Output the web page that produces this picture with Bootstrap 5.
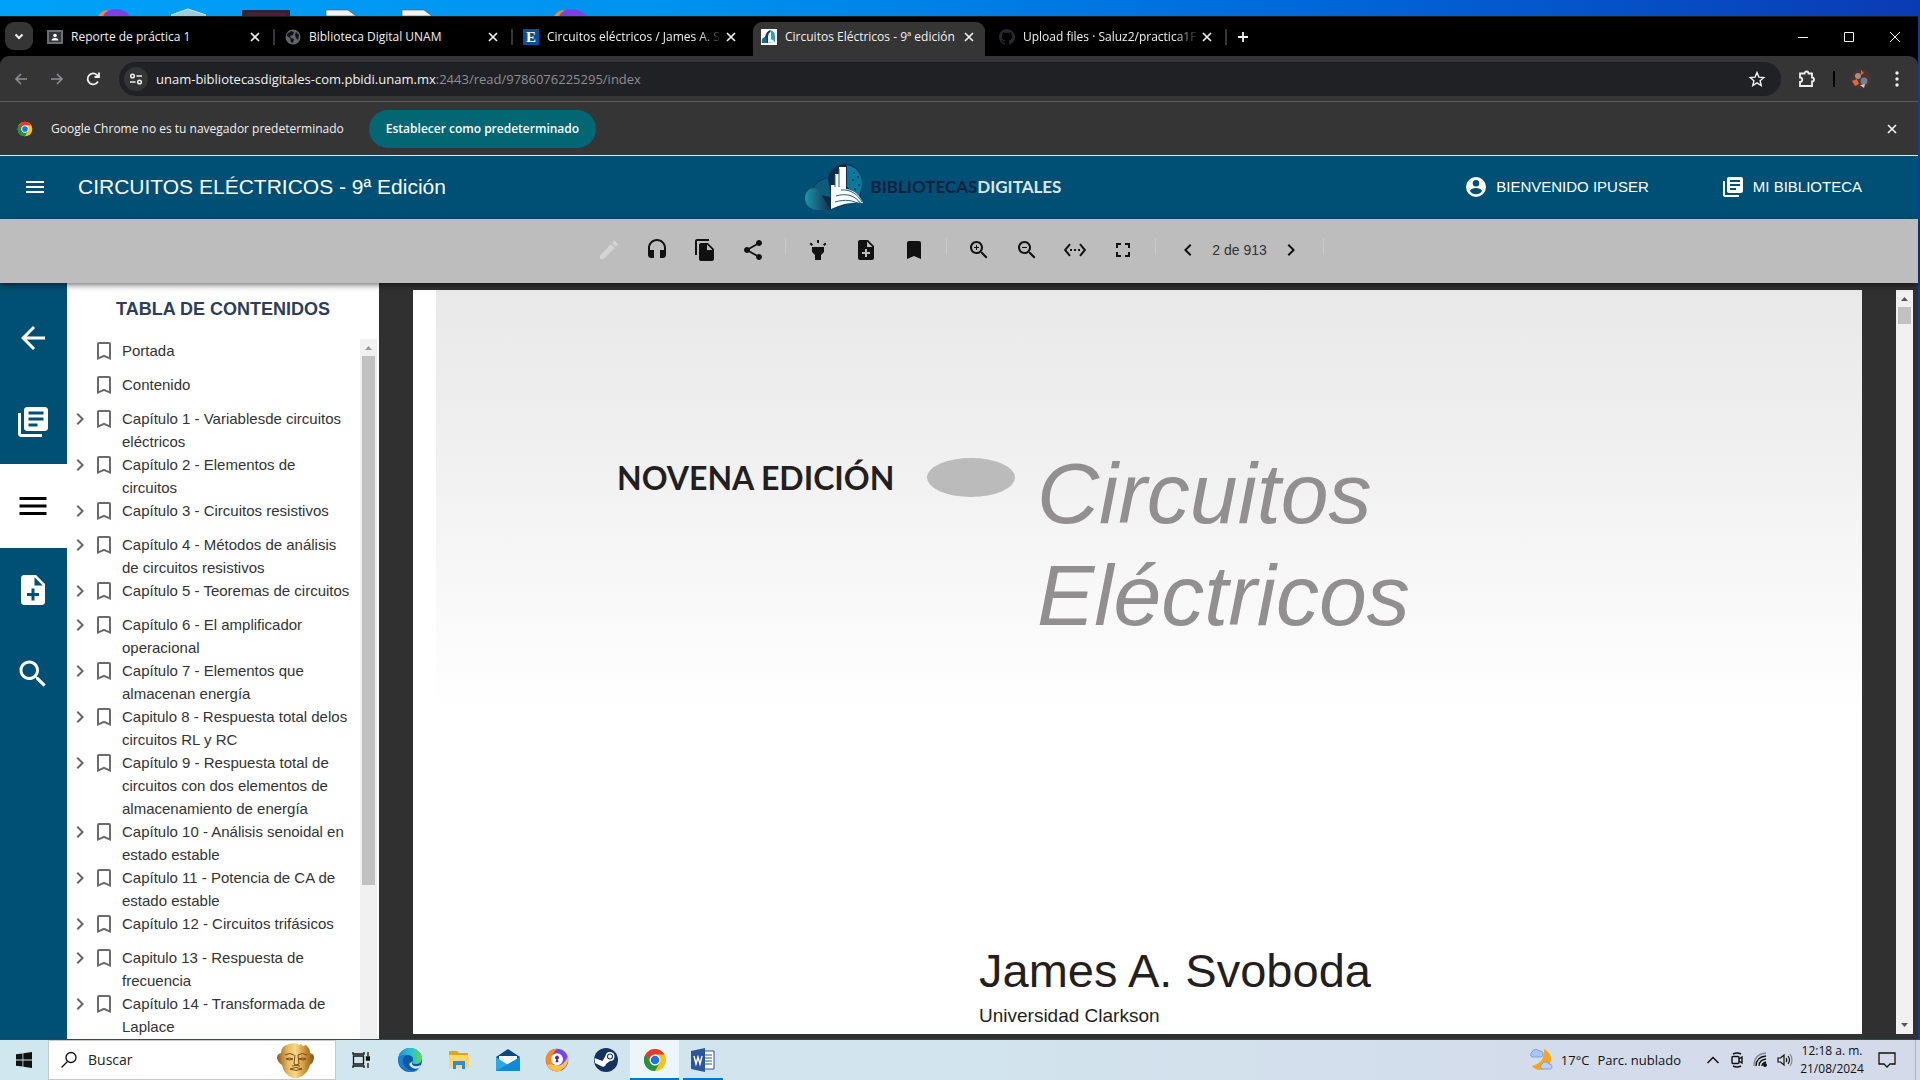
<!DOCTYPE html>
<html lang="es">
<head>
<meta charset="utf-8">
<meta name="viewport" content="width=device-width, initial-scale=1">
<title>Circuitos Eléctricos - 9ª edición</title>
<link href="https://cdn.jsdelivr.net/npm/bootstrap@5.3.0/dist/css/bootstrap.min.css" rel="stylesheet">
<style>
:root { --ui: "Open Sans", "Noto Sans", sans-serif; --app: "Liberation Sans", Arial, sans-serif; --blue: #004f74; }
body { font-family: var(--app); font-size: 15px; line-height: 24px; height: 100vh; overflow: hidden; background: linear-gradient(90deg, #00a2f8, #0092ef 35%, #0068da 68%, #0b3ab4); }
button { border: 0; background: none; padding: 0; color: inherit; display: inline-flex; align-items: center; justify-content: center; }
a { color: inherit; text-decoration: none; }
svg { display: block; flex: none; fill: currentColor; }
.i16 { width: 16px; height: 16px; } .i20 { width: 20px; height: 20px; } .i24 { width: 24px; height: 24px; } .i36 { width: 36px; height: 36px; }
.ln { fill: none; stroke: currentColor; }
.win { margin-right: 2px; min-height: 0; }
.chrome-ui { font-family: var(--ui); font-size: 12px; color: #f1f1f1; }
.tabstrip { height: 40px; background: #000; border-top: 1px solid #1b1b1b; padding: 5px 0 0 5px; }
.tab-list-btn { width: 28px; height: 28px; border-radius: 9px; background: #353535; margin-right: 4px; }
.tabitem { width: 238px; height: 34px; padding: 0 12px 4px 10px; position: relative; }
.tabitem .tab-text { flex: 1; margin: 0 0 0 8px; white-space: nowrap; min-width: 0; }
.tabitem .fade-text { -webkit-mask-image: linear-gradient(90deg, #000 86%, transparent); mask-image: linear-gradient(90deg, #000 86%, transparent); }
.tabitem.sep::after { content: ""; position: absolute; right: 0; top: 7px; width: 2px; height: 16px; background: #35363a; }
.tabitem.current { background: #353535; border-radius: 9px 9px 0 0; width: 232px; margin: 0 4px 0 2px; padding: 0 8px 4px; }
.winbtn { width: 46px; height: 30px; }
.navrow { height: 46px; background: #353535; border-radius: 9px 9px 0 0; border-bottom: 1px solid #5c5c5c; padding: 0 11px 0 3px; }
.navbtn { width: 36px; height: 34px; }
.navsep { width: 2px; height: 16px; background: #000; margin: 0 16px; }
.omnibox { height: 34px; border-radius: 17px; background: #202124; padding: 0 14px 0 5px; margin-left: 8px; font-size: 13px; }
.omnibox .site { width: 24px; height: 24px; border-radius: 50%; background: #353535; }
.dim { color: #8d8f93; }
.infobar { height: 54px; background: #353535; border-bottom: 1px solid #e6e6e6; padding: 0 18px 0 17px; font-size: 12px; }
.info-text { margin: 0 25px 0 18px; }
.default-btn { height: 38px; border-radius: 19px; background: #036773; color: #fff; padding: 0 17px; font-weight: 600; }
.apphead { height: 63px; background: var(--blue); color: #fff; padding-bottom: 2px; }
.apphead h1 { font-size: 21px; line-height: 24px; margin: 0; font-weight: 400; }
.side-cell { flex: 1 1 0; }
.menu-btn { padding: 0 31px 0 23px; }
.brand-link { padding-right: 52px; }
.wordmark { font-family: Lato, "Liberation Sans", sans-serif; font-weight: 700; font-size: 17px; line-height: 24px; color: #12203e; }
.wordmark span { color: #dfe6ea; }
.tools { height: 64px; background: #bdbdbd; color: #111; box-shadow: 0 2px 6px rgba(0,0,0,.55); position: relative; z-index: 2; padding: 0 1px 2px 0; }
.tools button { width: 48px; height: 48px; }
.tsep { width: 1px; height: 16px; background: #c9c9c9; margin: 0 8px 8px; }
.pagenum { width: 55px; text-align: center; font-size: 14px; color: #333; white-space: nowrap; }
.rail { width: 67px; background: var(--blue); color: #fff; padding-top: 13px; }
.rail button { height: 84px; width: 67px; padding-right: 2px; }
.rail .on { background: #fff; color: #000; }
.toc { width: 312px; background: #fff; }
.toc h2 { font-size: 18px; line-height: 24px; font-weight: 700; color: #2c3e5a; margin: 14px 0 18px; text-align: center; }
.toclist { list-style: none; margin: 0; padding: 0 0 0 1px; flex: 1; overflow: hidden; color: #333; font-size: 15px; line-height: 23px; }
.toclist li { min-height: 34px; display: flex; align-items: flex-start; }
.toclist a { max-width: 230px; }
.toclist button, .toclist .gap { width: 24px; height: 24px; color: #666; flex: none; }
.toclist .mark-ic { color: #6b6b6b; margin-right: 6px; }
.track { width: 17px; background: #f1f1f1; color: #555; }
.toc .track { margin-right: 2px; color: #999; }
.thumb { width: 13px; background: #c1c1c1; }
.viewer { background: #303030; padding: 7px 5px 5px 34px; }
.sheet { background: #fff; margin-right: 34px; padding-left: 23px; overflow: hidden; }
.cover { height: 100%; background: linear-gradient(#e9e9e9, #f0f0f0 160px, #fff 420px); padding-top: 152px; }
.edition { font-family: Lato, "Liberation Sans", sans-serif; font-weight: 700; font-size: 32px; line-height: 44px; color: #231f20; width: 310px; margin: 14px 0 0 181px; white-space: nowrap; }
.dot { width: 88px; height: 39px; border-radius: 50%; background: #bbb; margin-top: 16px; }
.book-title { font-size: 86px; line-height: 102px; font-style: italic; color: #918f90; margin: 0 0 0 22px; font-weight: 400; }
.author { margin: 299px 0 0 543px; color: #231f20; }
.author h3 { font-size: 47px; line-height: 52px; font-weight: 400; margin: 0 0 7px; }
.author p { font-size: 19px; line-height: 24px; margin: 0; }
.taskbar { height: 41px; border-top: 1px solid #1c4f6b; background: linear-gradient(90deg, #d0e7ef, #d2e4ee 50%, #d3dceb 80%, #d4daea); font-family: var(--ui); font-size: 13px; color: #111; }
.searchbox { width: 288px; height: 40px; background: #fff; border: 1px solid #c5c9cb; padding: 0 20px 0 11px; }
.searchbox input { border: 0; outline: 0; flex: 1; min-width: 0; margin-left: 10px; padding: 0; font-size: 14px; background: none; }
.searchbox input::placeholder { color: #222; opacity: 1; }
.start-btn { width: 48px; height: 40px; }
.task { width: 49px; height: 40px; border-bottom: 2px solid transparent; padding-top: 2px; }
.task.open { border-color: #0078d4; width: 40px; margin-left: 4px; }
.task.focus-app { border-color: #0078d4; background: #ecf5f9; }
.tray button { width: 24px; height: 40px; }
.clock { font-size: 12px; line-height: 18px; text-align: center; width: 70px; }
.desk-edge { width: 1px; height: 40px; background: #aab4c4; }
</style>
<script src="https://cdn.jsdelivr.net/npm/bootstrap@5.3.0/dist/js/bootstrap.bundle.min.js"></script>
</head>
<body class="d-flex flex-column">
<svg width="0" height="0" class="position-absolute" aria-hidden="true">
 <symbol id="x" viewBox="0 0 16 16"><path d="M4 4l8 8M12 4l-8 8" fill="none" stroke="currentColor" stroke-width="1.7"/></symbol>
 <symbol id="menu" viewBox="0 0 24 24"><path d="M3 18h18v-2H3v2zm0-5h18v-2H3v2zm0-7v2h18V6H3z"/></symbol>
 <symbol id="lib" viewBox="0 0 24 24"><path d="M4 6H2v14c0 1.100.9 2 2 2h14v-2H4V6zm16-4H8c-1.100 0-2 .9-2 2v12c0 1.100.9 2 2 2h12c1.100 0 2-.9 2-2V4c0-1.100-.9-2-2-2zm-1 9H9V9h10v2zm-4 4H9v-2h6v2zm4-8H9V5h10v2z"/></symbol>
 <symbol id="note" viewBox="0 0 24 24"><path d="M14 2H6c-1.100 0-2 .9-2 2v16c0 1.100.9 2 2 2h12c1.100 0 2-.9 2-2V8l-6-6zm2 14h-3v3h-2v-3H8v-2h3v-3h2v3h3v2zm-3-7V3.500L18.500 9H13z"/></symbol>
 <symbol id="search" viewBox="0 0 24 24"><path d="M15.500 14h-.79l-.28-.27C15.410 12.590 16 11.110 16 9.500 16 5.910 13.090 3 9.500 3S3 5.910 3 9.500 5.910 16 9.500 16c1.610 0 3.090-.59 4.230-1.570l.27.28v.79l5 4.990L20.490 19l-4.990-5zm-6 0C7.010 14 5 11.990 5 9.500S7.010 5 9.500 5 14 7.010 14 9.500 11.990 14 9.500 14z"/></symbol>
 <symbol id="bm" viewBox="0 0 24 24"><path d="M17 3H7c-1.100 0-2 .9-2 2v16l7-3 7 3V5c0-1.100-.9-2-2-2zm0 15l-5-2.180L7 18V5h10v13z"/></symbol>
 <symbol id="right" viewBox="0 0 24 24"><path d="M10 6L8.590 7.410 13.170 12l-4.580 4.590L10 18l6-6z"/></symbol>
 <symbol id="left" viewBox="0 0 24 24"><path d="M15.410 7.410L14 6l-6 6 6 6 1.410-1.410L10.830 12z"/></symbol>
 <symbol id="chrome" viewBox="0 0 48 48"><circle cx="24" cy="24" r="22" fill="#fbc116"/><path d="M24 24L33.500 29.500 24 46A22 22 0 0 1 5 13l9.500 16.500z" fill="#229342"/><path d="M5 13A22 22 0 0 1 43 13H24l-9 16z" fill="#e33b2e"/><path d="M5 13l9.500 16.500L24 35l-5 10.500A22 22 0 0 1 5 13z" fill="#229342"/><circle cx="24" cy="24" r="11" fill="#fff"/><circle cx="24" cy="24" r="8.500" fill="#1a73e8"/></symbol>
 <symbol id="fox" viewBox="0 0 32 32"><circle cx="16" cy="16" r="15" fill="#7548e6"/><path d="M16 1C5 1-2 12 3 23c4 8 14 10 20 6-6 0-14-4-14-13 0-7 3-11 7-15z" fill="#ff8a1c"/><path d="M3 23c4 8 16 11 24 2 4-5 4-9 3-14-2 8-8 13-14 12-4 0-9-3-13 0z" fill="#ffc34a"/><circle cx="16" cy="15" r="8" fill="#fff"/><path d="M14 19l1-4a2.500 2.500 0 1 1 2 0l1 4z" fill="#4c2c92"/></symbol>
</svg>

<svg width="640" height="16" viewBox="0 0 640 16" aria-hidden="true">
 <path d="M98 16q4-6 10-6l4 6z" fill="#ff8a1c"/><path d="M103 16q3-7 14-7 9 1 13 7z" fill="#7c3fe8"/>
 <path d="M171 15l17-6 18 6v1h-35z" fill="#9ccbe0"/><path d="M171 15l17-6 18 6" fill="none" stroke="#d5e8ef"/>
 <path d="M242 10h48v6h-48z" fill="#2c2540"/><path d="M247 13h38v3h-38z" fill="#591c2c"/>
 <path d="M326 10h22l8 6h-30zM402 10h22l8 6h-30z" fill="#f3f3f3" stroke="#555" stroke-width=".6"/>
 <path d="M554 16q4-6 10-6l4 6z" fill="#ff8a1c"/><path d="M559 16q3-7 14-7 9 1 13 7z" fill="#7c3fe8"/>
</svg>

<div class="win d-flex flex-column flex-grow-1">
 <header class="chrome-ui">
  <div class="tabstrip d-flex">
   <button class="tab-list-btn" aria-label="Buscar pestañas"><svg class="i16 ln" viewBox="0 0 16 16" stroke-width="2"><path d="M4.500 6.500L8 10l3.500-3.500"/></svg></button>
   <div class="tabitem sep d-flex align-items-center">
    <svg class="i16" viewBox="0 0 16 16"><path fill="#6a6d74" d="M0 1h16v14H0z"/><path fill="#33353a" d="M2 3h12v10H2z"/><circle cx="8" cy="6.500" r="1.800" fill="#fff"/><path d="M4.500 11.500q0-2.500 3.500-2.500t3.500 2.500z" fill="#fff"/></svg>
    <a href="#" class="tab-text">Reporte de práctica 1</a><button aria-label="Cerrar"><svg class="i16"><use href="#x"/></svg></button>
   </div>
   <div class="tabitem sep d-flex align-items-center">
    <svg class="i16" viewBox="0 0 16 16"><circle cx="8" cy="8" r="7.500" fill="#62656a"/><path fill="#111" d="M2 5l4-3 3 1-1 3-3 1 1 2 3 1-1 4-2-1-1-4-3-2zM11 3l3 3-1 5-2-2-1-3z"/></svg>
    <a href="#" class="tab-text">Biblioteca Digital UNAM</a><button aria-label="Cerrar"><svg class="i16"><use href="#x"/></svg></button>
   </div>
   <div class="tabitem d-flex align-items-center">
    <svg class="i16 overflow-visible" viewBox="0 0 16 16"><path fill="#0d4f94" d="M0 0h16v16H0z"/><text x="3" y="13" font-family="Liberation Serif, serif" font-weight="700" font-size="15" fill="#fff">E</text></svg>
    <a href="#" class="tab-text fade-text">Circuitos eléctricos / James A. S</a><button aria-label="Cerrar"><svg class="i16"><use href="#x"/></svg></button>
   </div>
   <div class="tabitem current d-flex align-items-center">
    <svg class="i16" viewBox="0 0 16 16"><path fill="#fff" d="M0 0h16v16H0z"/><path fill="#12425f" d="M1 14q-1-5 3-6 1-6 6-7v13z"/><path fill="#3a9cc2" d="M9 1q5 1 5 6v6q-3 0-5 1z"/><path fill="#1d6c93" d="M1 13q-1-4 4-5l1 6H2z"/><path fill="#eef5f8" d="M7 14V7l1-3 2-1v7q3 1 4 4-4-1-7 0z"/></svg>
    <a href="#" class="tab-text">Circuitos Eléctricos - 9ª edición</a><button aria-label="Cerrar"><svg class="i16"><use href="#x"/></svg></button>
   </div>
   <div class="tabitem sep d-flex align-items-center">
    <svg class="i16" viewBox="0 0 16 16"><path fill="#24292f" d="M8 0C3.580 0 0 3.580 0 8c0 3.540 2.290 6.530 5.470 7.590.4.070.55-.17.55-.38v-1.500c-2 .4-2.500-.5-2.700-1-.1-.2-.5-.9-.8-1.100-.3-.2-.7-.5 0-.5.6 0 1.100.6 1.200.8.7 1.200 1.900.9 2.300.7.1-.5.3-.9.500-1.100-1.800-.2-3.600-.9-3.600-4 0-.9.300-1.600.8-2.200-.1-.2-.4-1 .1-2.100 0 0 .7-.2 2.200.8a7.500 7.500 0 0 1 4 0c1.500-1 2.200-.8 2.200-.8.4 1.100.200 1.900.1 2.100.5.6.8 1.300.8 2.200 0 3.100-1.900 3.800-3.700 4 .3.300.6.800.6 1.500v2.200c0 .2.100.5.500.4A8 8 0 0 0 8 0z"/></svg>
    <a href="#" class="tab-text fade-text">Upload files · Saluz2/practica1F</a><button aria-label="Cerrar"><svg class="i16"><use href="#x"/></svg></button>
   </div>
   <button class="ms-2" aria-label="Nueva pestaña"><svg class="i16 ln mb-1" viewBox="0 0 16 16" stroke-width="1.800"><path d="M8 3v10M3 8h10"/></svg></button>
   <div class="ms-auto d-flex">
    <button class="winbtn" aria-label="Minimizar"><svg class="i16 ln" viewBox="0 0 16 16"><path d="M3 8.500h10"/></svg></button>
    <button class="winbtn" aria-label="Maximizar"><svg class="i16 ln" viewBox="0 0 16 16"><path d="M3.500 3.500h9v9h-9z"/></svg></button>
    <button class="winbtn" aria-label="Cerrar ventana"><svg class="i16 ln" viewBox="0 0 16 16"><path d="M3 3l10 10M13 3L3 13"/></svg></button>
   </div>
  </div>
  <div class="bg-black"><nav class="navrow d-flex align-items-center">
   <button class="navbtn" aria-label="Atrás"><svg class="i16 ln dim" viewBox="0 0 16 16" stroke-width="1.600"><path d="M14 8H3M8 3L3 8l5 5"/></svg></button>
   <button class="navbtn" aria-label="Adelante"><svg class="i16 ln dim" viewBox="0 0 16 16" stroke-width="1.600"><path d="M2 8h11M8 3l5 5-5 5"/></svg></button>
   <button class="navbtn" aria-label="Recargar"><svg class="i16 ln" viewBox="0 0 16 16" stroke-width="1.800"><path d="M13 10.500A5.500 5.500 0 1 1 12 4l1.500 1.500M14 1.500V6H9.500"/></svg></button>
   <div class="omnibox d-flex align-items-center flex-grow-1">
    <button class="site me-2" aria-label="Información del sitio"><svg class="i16 ln" viewBox="0 0 16 16" stroke-width="1.500"><circle cx="4.500" cy="5" r="1.800"/><path d="M8.500 5H14M2 11h5.500"/><circle cx="11.500" cy="11" r="1.800"/></svg></button>
    <a href="#" class="flex-grow-1 text-nowrap">unam-bibliotecasdigitales-com.pbidi.unam.mx<span class="dim">:2443/read/9786076225295/index</span></a>
    <button aria-label="Marcar"><svg class="i20 ln" viewBox="0 0 20 20" stroke-width="1.400"><path d="M10 3.500l1.900 4.600 4.900.4-3.700 3.200 1.100 4.800-4.200-2.600-4.200 2.600 1.100-4.800-3.700-3.200 4.900-.4z"/></svg></button>
   </div>
   <button class="ms-3" aria-label="Extensiones"><svg class="i20 ln" viewBox="0 0 20 20" stroke-width="1.800"><path d="M3 4.500h4.500a2 2 0 0 1 4 0H15v4a2 2 0 0 1 0 4V17H3v-4a2.200 2.200 0 0 0 0-4.500z"/></svg></button>
   <span class="navsep"></span>
   <button aria-label="Perfil"><svg class="i20" viewBox="0 0 20 20"><circle cx="10" cy="10" r="10" fill="#4a3432"/><circle cx="7" cy="7" r="3" fill="#a78d84"/><circle cx="13" cy="12" r="3.500" fill="#75808f"/><path d="M10 1l3 3-3 2zM1 12l5-2 2 5-4 2z" fill="#dd6a38"/><path d="M9 16l5-1-1 4z" fill="#d5cbbb"/></svg></button>
   <button class="ms-3" aria-label="Menú de Chrome"><svg class="i20" viewBox="0 0 20 20"><circle cx="10" cy="4" r="1.700"/><circle cx="10" cy="10" r="1.700"/><circle cx="10" cy="16" r="1.700"/></svg></button>
  </nav></div>
  <div class="infobar d-flex align-items-center">
   <svg class="i16"><use href="#chrome"/></svg><span class="info-text">Google Chrome no es tu navegador predeterminado</span>
   <button class="default-btn">Establecer como predeterminado</button>
   <button class="ms-auto" aria-label="Cerrar aviso"><svg class="i16"><use href="#x"/></svg></button>
  </div>
 </header>

 <header class="apphead d-flex align-items-center">
  <div class="side-cell d-flex align-items-center"><button class="menu-btn" aria-label="Menú"><svg class="i24"><use href="#menu"/></svg></button><h1>CIRCUITOS ELÉCTRICOS - 9ª Edición</h1></div>
  <a href="#" class="brand-link d-flex align-items-center">
   <svg width="58" height="48" viewBox="0 0 58 48" class="me-2"><defs><linearGradient id="cl" x1="0" x2="1"><stop offset="0" stop-color="#1e93ab"/><stop offset="1" stop-color="#12304e"/></linearGradient></defs><path d="M26 46H11C4 46 0 41 0 35c0-6 4-10 9-10 1-5 6-10 14-9 1-8 8-15 17-15 11 0 18 9 17 21l-2 15z" fill="#102b4a"/><path d="M26 47H11C4 46 0 41 0 35c0-6 4-10 9-10 6 0 8 4 8 8z" fill="url(#cl)"/><path d="M9 25c3-7 9-9 14-9l3 18-10-2c-1-4-3-7-7-7z" fill="#0d5c7e"/><path d="M42 2c10 2 15 9 15 20l-3 12-12-10z" fill="#087a9e"/><path d="M48 9h2v2h-2zm4 4h2v2h-2zm-5 3h2v2h-2zm6 5h2v2h-2zm-4 4h2v2h-2z" fill="#123e60"/><path d="M26 22h4V11h4V4h7v22c9 1 14 7 17 14q-14-2-32 6z" fill="#fff"/><path d="M30 24V12M34 24V6M36 27c10-1 17 5 21 12M31 33c10-3 19-1 25 8M30 39c10-3 18-2 26 3" fill="none" stroke="#12607f" stroke-width="1"/></svg>
   <strong class="wordmark">BIBLIOTECAS<span>DIGITALES</span></strong></a>
  <div class="side-cell d-flex justify-content-end align-items-center">
   <a href="#" class="d-flex align-items-center me-5"><svg class="i24 me-2" viewBox="0 0 24 24"><path fill-rule="evenodd" d="M12 2a10 10 0 1 0 0 20 10 10 0 0 0 0-20zm0 3a3.300 3.300 0 1 1 0 6.600A3.300 3.300 0 0 1 12 5zm0 14.200a7.200 7.200 0 0 1-6-3.220c.03-1.990 4-3.080 6-3.080s5.970 1.090 6 3.080a7.200 7.200 0 0 1-6 3.220z"/></svg>BIENVENIDO IPUSER</a>
   <a href="#" class="d-flex align-items-center ms-4 pe-2 me-5"><svg class="i24 me-2"><use href="#lib"/></svg>MI BIBLIOTECA</a>
  </div>
 </header>

 <div class="tools d-flex justify-content-center align-items-center">
  <button disabled aria-label="Editar" style="color:#d4d4d4"><svg class="i24" viewBox="0 0 24 24"><path d="M3 17.250V21h3.750L17.810 9.940l-3.750-3.750L3 17.250zM20.710 7.040c.39-.39.39-1.020 0-1.410l-2.340-2.340c-.39-.39-1.020-.39-1.410 0l-1.830 1.830 3.750 3.750 1.830-1.830z"/></svg></button>
  <button aria-label="Escuchar"><svg class="i24" viewBox="0 0 24 24"><path d="M12 1c-4.970 0-9 4.030-9 9v7c0 1.660 1.340 3 3 3h3v-8H5v-2c0-3.870 3.130-7 7-7s7 3.130 7 7v2h-4v8h3c1.660 0 3-1.340 3-3v-7c0-4.970-4.030-9-9-9z"/></svg></button>
  <button aria-label="Copiar"><svg class="i24" viewBox="0 0 24 24"><path d="M16 1H4c-1.100 0-2 .9-2 2v14h2V3h12V1zm-1 4l6 6v10c0 1.100-.9 2-2 2H7.990C6.890 23 6 22.100 6 21l.010-14c0-1.100.89-2 1.990-2h7zm-1 7h5.500L14 6.500V12z"/></svg></button>
  <button aria-label="Compartir"><svg class="i24" viewBox="0 0 24 24"><path d="M18 16.080c-.76 0-1.440.3-1.960.77L8.910 12.700c.05-.23.09-.46.09-.7s-.04-.47-.09-.7l7.050-4.110c.54.5 1.250.81 2.040.81 1.660 0 3-1.340 3-3s-1.340-3-3-3-3 1.340-3 3c0 .24.040.47.090.7L8.040 9.810C7.500 9.310 6.790 9 6 9c-1.660 0-3 1.340-3 3s1.340 3 3 3c.79 0 1.500-.31 2.040-.81l7.120 4.160c-.05.21-.08.43-.08.650 0 1.610 1.310 2.920 2.920 2.920s2.920-1.310 2.920-2.920-1.310-2.920-2.920-2.920z"/></svg></button>
  <span class="tsep"></span>
  <button aria-label="Resaltar"><svg class="i24" viewBox="0 0 24 24"><path d="M6 14l3 3v5h6v-5l3-3V9H6zm5-12h2v3h-2zM3.500 5.880l1.410-1.410 2.120 2.120L5.620 8zm13.460.71l2.120-2.120 1.410 1.410L18.380 8z"/></svg></button>
  <button aria-label="Agregar nota"><svg class="i24"><use href="#note"/></svg></button>
  <button aria-label="Marcador"><svg class="i24" viewBox="0 0 24 24"><path d="M17 3H7c-1.100 0-1.990.9-1.990 2L5 21l7-3 7 3V5c0-1.100-.9-2-2-2z"/></svg></button>
  <span class="tsep"></span>
  <button aria-label="Acercar"><svg class="i24" viewBox="0 0 24 24"><use href="#search"/><path d="M12 10h-2v2H9v-2H7V9h2V7h1v2h2z"/></svg></button>
  <button aria-label="Alejar"><svg class="i24" viewBox="0 0 24 24"><use href="#search"/><path d="M7 9h5v1H7z"/></svg></button>
  <button aria-label="Ajustar ancho"><svg class="i24" viewBox="0 0 24 24"><path d="M7.770 6.760L6.230 5.480.82 12l5.410 6.520 1.540-1.280L3.420 12l4.350-5.240zM7 13h2v-2H7v2zm10-2h-2v2h2v-2zm-6 2h2v-2h-2v2zm6.770-7.520l-1.540 1.280L20.580 12l-4.350 5.240 1.540 1.280L23.180 12l-5.410-6.520z"/></svg></button>
  <button aria-label="Pantalla completa"><svg class="i24" viewBox="0 0 24 24"><path d="M7 14H5v5h5v-2H7v-3zm-2-4h2V7h3V5H5v5zm12 7h-3v2h5v-5h-2v3zM14 5v2h3v3h2V5h-5z"/></svg></button>
  <span class="tsep"></span>
  <button aria-label="Anterior"><svg class="i24"><use href="#left"/></svg></button>
  <span class="pagenum">2 de 913</span>
  <button aria-label="Siguiente"><svg class="i24"><use href="#right"/></svg></button>
  <span class="tsep"></span>
 </div>

 <main class="d-flex flex-grow-1 overflow-hidden">
  <nav class="rail d-flex flex-column">
   <button aria-label="Volver"><svg class="i36" viewBox="0 0 24 24"><path d="M20 11H7.830l5.590-5.590L12 4l-8 8 8 8 1.410-1.410L7.830 13H20v-2z"/></svg></button>
   <button aria-label="Biblioteca"><svg class="i36"><use href="#lib"/></svg></button>
   <button class="on" aria-label="Contenidos"><svg class="i36"><use href="#menu"/></svg></button>
   <button aria-label="Notas"><svg class="i36"><use href="#note"/></svg></button>
   <button aria-label="Buscar"><svg class="i36"><use href="#search"/></svg></button>
  </nav>
  <aside class="toc d-flex flex-column">
   <h2>TABLA DE CONTENIDOS</h2>
   <div class="d-flex flex-grow-1 overflow-hidden">
    <ul class="toclist" id="toc"></ul>
    <div class="track d-flex flex-column align-items-center"><svg width="17" height="17" viewBox="0 0 17 17"><path d="M5 11l3.500-4 3.500 4z"/></svg><div class="thumb" style="height:75.5%"></div></div>
   </div>
  </aside>
  <section class="viewer d-flex flex-grow-1">
   <article class="sheet flex-grow-1"><div class="cover">
    <div class="d-flex align-items-start"><p class="edition">NOVENA EDICIÓN</p><div class="dot"></div><h1 class="book-title">Circuitos<br>Eléctricos</h1></div>
    <div class="author"><h3>James A. Svoboda</h3><p>Universidad Clarkson</p></div>
   </div></article>
   <div class="track d-flex flex-column align-items-center"><svg width="17" height="17" viewBox="0 0 17 17"><path d="M5 11l3.500-4 3.500 4z"/></svg><div class="thumb" style="height:17px"></div><svg class="mt-auto" width="17" height="17" viewBox="0 0 17 17"><path d="M5 6l3.500 4L12 6z"/></svg></div>
  </section>
 </main>
</div>

<footer class="taskbar d-flex align-items-center">
 <button class="start-btn" aria-label="Inicio"><svg class="i16" viewBox="0 0 16 16"><path d="M0 2.300L6.500 1.400v6.100H0zM7.300 1.300L16 0v7.500H7.300zM0 8.400h6.500v6.200L0 13.700zM7.300 8.400H16V16l-8.700-1.300z"/></svg></button>
 <label class="searchbox d-flex align-items-center"><svg class="ln" width="18" height="18" viewBox="0 0 18 18" stroke-width="1.300"><circle cx="11" cy="6.500" r="5"/><path d="M7.500 10.500L1.500 16.500"/></svg><input type="text" placeholder="Buscar" aria-label="Buscar">
  <svg width="38" height="37" viewBox="0 0 38 37"><defs><linearGradient id="gold"><stop offset="0" stop-color="#8e5a1c"/><stop offset=".3" stop-color="#e9bd62"/><stop offset=".5" stop-color="#f6d88a"/><stop offset=".7" stop-color="#d79f42"/><stop offset="1" stop-color="#8a5317"/></linearGradient></defs><path d="M6 5q6-4 13-4l3 2 2-1 2 2 3-1q4 3 4 8 4 1 4 4 0 5-4 8-2 9-12 13h-5Q7 33 5 23q-4-2-5-7 0-4 4-5 0-3 2-6z" fill="url(#gold)"/><path d="M8 13q5-3 9 0M21 13q4-3 9 0M9 17q3-2 7 0-3 2-7 0zM22 17q3-2 7 0-3 2-7 0zM18 13l-1 9 2 1 3-1-1-9M13 27q6-3 12 0-6 3-12 0M15 24q4-1 8 0" fill="none" stroke="#7c4a14"/></svg></label>
 <button class="task" aria-label="Vista de tareas"><svg class="ln" width="18" height="18" viewBox="0 0 18 18" stroke-width="1.300"><path d="M1.500 5h10v8h-10zM1 1v2h11V1M1 17v-2h11v2M16 1v4M16 12v5"/><path d="M14.500 6h3v3h-3z" fill="currentColor"/></svg></button>
 <button class="task" aria-label="Edge"><svg class="i24" viewBox="0 0 24 24"><defs><linearGradient id="eg"><stop offset="0" stop-color="#1b8fd8"/><stop offset=".55" stop-color="#2bc3d2"/><stop offset="1" stop-color="#62d84e"/></linearGradient></defs><circle cx="12" cy="12" r="12" fill="#0c59a4"/><path d="M0 11C1 4 6 0 12 0c7 0 12 5 12 10 0 4-3 6-6 6-3 0-4-1-4-2 1-1 1-2 1-3 0-2-2-4-6-4C5 7 1 9 0 11z" fill="url(#eg)"/><path d="M0 11c1-3 5-4 8-4-4 3-4 8-1 12 3 4 8 4 11 3 1 0 2-1 3-1-4 4-10 4-15 0-4-2-6-6-6-10z" fill="#1b7fcf"/><path d="M14 14q-1 5 6 4l3-1-2 3q-6 2-9-2-2-3 2-4z" fill="#d3e7ef"/></svg></button>
 <button class="task" aria-label="Explorador"><svg class="i24" viewBox="0 0 24 24"><path d="M2 3h8l2 2h9v3H2z" fill="#e2a21d"/><path d="M2 7h20v13H2z" fill="#ffd766"/><path d="M6 21v-8h12v8h-3v-4H9v4z" fill="#2c8ddb"/></svg></button>
 <button class="task" aria-label="Correo"><svg class="i24" viewBox="0 0 24 24"><path d="M0 9L12 1l12 8v4H0z" fill="#0a4a83"/><path d="M3 8h18v8H3z" fill="#f4fbff"/><path d="M0 9l12 8 12-8v14H0z" fill="#29a9ea"/><path d="M0 23l24-14v14z" fill="#1289d6"/></svg></button>
 <button class="task" aria-label="Navegador"><svg class="i24"><use href="#fox"/></svg></button>
 <button class="task" aria-label="Steam"><svg class="i24" viewBox="0 0 24 24"><circle cx="12" cy="12" r="12" fill="#13325d"/><path d="M1 15l6 3a3 3 0 0 0 5-2l4-3a4.500 4.500 0 1 0-4.500-5l-3 5-8-3z" fill="#fff"/><circle cx="16" cy="8.500" r="3" fill="#13325d"/><circle cx="16" cy="8.500" r="2" fill="#fff"/></svg></button>
 <button class="task focus-app" aria-label="Chrome"><svg class="i24"><use href="#chrome"/></svg></button>
 <button class="task open" aria-label="Word"><svg class="i24" viewBox="0 0 24 24"><path d="M11 3h12v18H11z" fill="#fff" stroke="#2b579a"/><path d="M14 7h7M14 10h7M14 13h7M14 16h7" stroke="#2b579a"/><path d="M0 3l14-3v24L0 21z" fill="#2b579a"/><path d="M3 8l2 8 2-7 2 7 2-8" fill="none" stroke="#fff" stroke-width="1.400"/></svg></button>
 <div class="tray d-flex align-items-center ms-auto">
  <svg class="i24 me-2" viewBox="0 0 24 24"><path d="M15 1q8 4 7 12-3 9-12 9-5-1-7-4 13-3 12-17z" fill="#f7a521"/><path d="M3 9a3 3 0 0 1 0-5 4 4 0 0 1 7-1 3 3 0 0 1 2 6z" fill="#a9c6f1" stroke="#7ba1dc"/><path d="M13 21a3 3 0 0 1 0-5 4 4 0 0 1 7 0 2.500 2.500 0 0 1 1 5z" fill="#bcd3f5" stroke="#7ba1dc"/></svg>
  <span class="me-2">17°C</span><span class="me-3">Parc. nublado</span>
  <button class="ms-1" aria-label="Iconos ocultos"><svg class="i16 ln" viewBox="0 0 16 16" stroke-width="1.500"><path d="M2.500 11L8 5.500l5.500 5.500"/></svg></button>
  <button aria-label="Cámara"><svg class="i16 ln" viewBox="0 0 16 16" stroke-width="1.400"><rect x="3" y="4.500" width="7" height="7" rx="1"/><path d="M10 7l3-2v6l-3-2M4 2q4-2 8 0M4 14q4 2 8 0"/></svg></button>
  <button aria-label="Red"><svg class="i16 ln" viewBox="0 0 16 16" stroke-width="1.300"><path d="M9 14q0-3 4-4M6 14q0-6 7-7M3 14Q3 5 13 4" /><path d="M1 14Q1 2 13 1" stroke="#888"/><circle cx="12" cy="13" r="1.300" fill="currentColor"/></svg></button>
  <button aria-label="Volumen"><svg class="i16 ln" viewBox="0 0 16 16" stroke-width="1.200"><path d="M1 6h2.500L7 3v10l-3.500-3H1zM9 6q1.500 2 0 4M11 4q3 4 0 8"/><path d="M13 2q4 6 0 12" stroke="#888"/></svg></button>
  <div class="clock">12:18 a. m.<br>21/08/2024</div>
  <button class="ms-2" aria-label="Notificaciones"><svg class="ln" width="18" height="18" viewBox="0 0 18 18" stroke-width="1.300"><path d="M1 2h16v11h-5l-3 3-3-3H1z"/></svg></button>
  <span class="desk-edge ms-3 me-1"></span>
 </div>
</footer>
<script>
const chapters = ["Portada", "Contenido", "Capítulo 1 - Variablesde circuitos eléctricos", "Capítulo 2 - Elementos de circuitos", "Capítulo 3 - Circuitos resistivos", "Capítulo 4 - Métodos de análisis de circuitos resistivos", "Capítulo 5 - Teoremas de circuitos", "Capítulo 6 - El amplificador operacional", "Capítulo 7 - Elementos que almacenan energía", "Capitulo 8 - Respuesta total delos circuitos RL y RC", "Capítulo 9 - Respuesta total de circuitos con dos elementos de almacenamiento de energía", "Capítulo 10 - Análisis senoidal en estado estable", "Capítulo 11 - Potencia de CA de estado estable", "Capítulo 12 - Circuitos trifásicos", "Capitulo 13 - Respuesta de frecuencia", "Capítulo 14 - Transformada de Laplace"];
document.getElementById("toc").innerHTML = chapters.map((c, i) =>
 `<li>${i > 1 ? '<button aria-label="Expandir"><svg class="i24"><use href="#right"/></svg></button>' : '<span class="gap"></span>'}<svg class="i24 mark-ic"><use href="#bm"/></svg><a href="#">${c}</a></li>`).join("");
</script>
</body>
</html>
